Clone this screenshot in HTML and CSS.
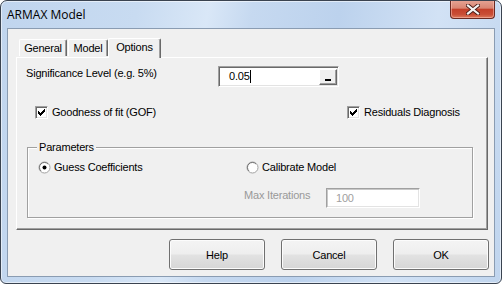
FILE: index.html
```html
<!DOCTYPE html>
<html lang="en">

<head>
    <title>ARMAX Model</title>
    <link rel="stylesheet" href="styles.css">
</head>

<body>
    <div class="window">
        <div class="titlebar">
            <span class="title">ARMAX Model</span>
            <div class="close">
                <svg width="14" height="11" viewBox="0 0 14 11">
                    <path d="M2 1.5 L12 9.5 M12 1.5 L2 9.5" stroke="#4a1c16" stroke-width="4" stroke-linecap="square" fill="none" />
                    <path d="M2 1.5 L12 9.5 M12 1.5 L2 9.5" stroke="#f4f4f4" stroke-width="2.2" stroke-linecap="square" fill="none" />
                </svg>
            </div>
        </div>
        <div class="client">
            <div class="tabs">
                <div class="tab tab-general">General</div>
                <div class="tab tab-model">Model</div>
                <div class="tab tab-options active">Options</div>
            </div>
            <div class="page">
                <div class="sig-row">
                    <span class="label">Significance Level (e.g. 5%)</span>
                    <div class="refedit">
                        <span class="value">0.05</span><span class="caret"></span>
                        <span class="ref-btn"><span class="ref-bar"></span></span>
                    </div>
                </div>
                <div class="check-row">
                    <label class="check">
                        <span class="box">
                            <svg width="7" height="7" viewBox="0 0 7 7" shape-rendering="crispEdges">
                                <path d="M0 2h1v3h-1z M1 3h1v3h-1z M2 4h1v3h-1z M3 3h1v3h-1z M4 2h1v3h-1z M5 1h1v3h-1z M6 0h1v3h-1z" fill="#000" />
                            </svg>
                        </span>
                        Goodness of fit (GOF)
                    </label>
                    <label class="check">
                        <span class="box">
                            <svg width="7" height="7" viewBox="0 0 7 7" shape-rendering="crispEdges">
                                <path d="M0 2h1v3h-1z M1 3h1v3h-1z M2 4h1v3h-1z M3 3h1v3h-1z M4 2h1v3h-1z M5 1h1v3h-1z M6 0h1v3h-1z" fill="#000" />
                            </svg>
                        </span>
                        Residuals Diagnosis
                    </label>
                </div>
                <div class="group">
                    <span class="legend">Parameters</span>
                    <div class="radio-row">
                        <label class="radio">
                            <svg class="dot" width="13" height="13" viewBox="0 0 13 13">
                                <circle cx="6.5" cy="6.5" r="5.5" fill="#fff" stroke="#a0a0a0" />
                                <path d="M2.6 10.4 A5.5 5.5 0 0 1 10.4 2.6" stroke="#696969" fill="none" transform="translate(0.6 0.6) scale(0.9)" />
                                <circle cx="6.5" cy="6.5" r="2" fill="#000" />
                            </svg>
                            Guess Coefficients
                        </label>
                        <label class="radio">
                            <svg class="dot" width="13" height="13" viewBox="0 0 13 13">
                                <circle cx="6.5" cy="6.5" r="5.5" fill="#fff" stroke="#a0a0a0" />
                                <path d="M2.6 10.4 A5.5 5.5 0 0 1 10.4 2.6" stroke="#696969" fill="none" transform="translate(0.6 0.6) scale(0.9)" />
                            </svg>
                            Calibrate Model
                        </label>
                    </div>
                    <div class="iter-row">
                        <span class="label disabled">Max Iterations</span>
                        <div class="textbox">100</div>
                    </div>
                </div>
            </div>
            <div class="buttons">
                <button>Help</button>
                <button>Cancel</button>
                <button>OK</button>
            </div>
        </div>
    </div>
</body>

</html>
```

FILE: styles.css
```css
body {
    margin: 0;
    background: #fff;
    font-family: "Liberation Sans", Arial, sans-serif;
    font-size: 11px;
    letter-spacing: -0.2px;
    color: #000;
}

.window {
    width: 502px;
    height: 284px;
    box-sizing: border-box;
    border: 1px solid #3a4350;
    border-radius: 7px 7px 6px 6px;
    background: linear-gradient(100deg, #c0d5ee 0%, #c8dbf1 25%, #d9e7f7 38%, #c6d9f0 46%, #bcd2ed 62%, #d2e2f5 80%, #c0d5ee 100%);
    box-shadow: inset 0 0 0 1px rgba(255, 255, 255, 0.55);
    display: flex;
    flex-direction: column;
    overflow: hidden;
}

.titlebar {
    height: 27px;
    display: flex;
    align-items: flex-start;
}

.title {
    padding-left: 6px;
    line-height: 27px;
    font-family: "Open Sans", sans-serif;
    font-size: 12px;
    letter-spacing: 0;
    color: #000;
}

.close {
    margin-left: auto;
    margin-right: 6px;
    margin-top: -1px;
    width: 45px;
    height: 19px;
    box-sizing: border-box;
    border: 1px solid #6b2a22;
    border-top: none;
    border-radius: 0 0 4px 4px;
    background: linear-gradient(#e6a596 0%, #d98572 45%, #c4402a 52%, #c94e36 80%, #dc7a5c 100%);
    box-shadow: inset 0 0 0 1px rgba(255, 200, 190, 0.5);
    display: flex;
    justify-content: center;
    align-items: center;
}

.client {
    flex: 1;
    margin: 0 6px 6px;
    border: 1px solid #8a9cb2;
    background: #f0f0f0;
    display: flex;
    flex-direction: column;
}

/* tab strip */
.tabs {
    height: 28px;
    padding-left: 11px;
    display: flex;
    align-items: flex-end;
}

.tab {
    height: 17px;
    box-sizing: border-box;
    border-top: 1px solid #fff;
    border-left: 1px solid #fff;
    border-right: 1px solid #696969;
    box-shadow: inset -1px 0 0 #a0a0a0;
    border-radius: 2px 2px 0 0;
    text-align: center;
    line-height: 16px;
    margin-bottom: 1px;
}

.tab-general {
    width: 48px;
}

.tab-model {
    width: 40px;
    margin-left: 1px;
}

.tab-options {
    width: 53px;
}

.tab.active {
    height: 20px;
    line-height: 17px;
    margin-bottom: -1px;
    background: #f0f0f0;
    position: relative;
    z-index: 1;
}

.page {
    margin-left: 8px;
    width: 472px;
    height: 173px;
    box-sizing: border-box;
    border-top: 1px solid #fff;
    border-left: 1px solid #fff;
    border-right: 1px solid #696969;
    border-bottom: 1px solid #696969;
    box-shadow: inset -1px -1px 0 #a0a0a0;
}

.label {
    line-height: 13px;
}

.disabled {
    color: #999;
}

.sig-row {
    display: flex;
    align-items: flex-start;
    padding: 8px 0 0 9px;
}

.sig-row .label {
    width: 192px;
    margin-top: 1px;
}

.refedit {
    width: 121px;
    height: 21px;
    box-sizing: border-box;
    border: 1px solid;
    border-color: #a0a0a0 #fff #fff #a0a0a0;
    box-shadow: inset 1px 1px 0 #696969, inset -1px -1px 0 #e3e3e3;
    background: #fff;
    display: flex;
    align-items: center;
    padding: 0 1px 0 10px;
}

.value {
    line-height: 13px;
}

.caret {
    width: 1px;
    height: 13px;
    background: #000;
}

.ref-btn {
    margin-left: auto;
    width: 18px;
    height: 16px;
    box-sizing: border-box;
    border: 1px solid;
    border-color: #fff #696969 #696969 #fff;
    box-shadow: inset -1px -1px 0 #a0a0a0;
    background: #f0f0f0;
    display: flex;
    justify-content: center;
    align-items: flex-end;
    padding-bottom: 3px;
}

.ref-bar {
    width: 6px;
    height: 2px;
    background: #000;
}

.check-row {
    display: grid;
    grid-template-columns: 312px auto;
    margin-top: 19px;
    padding-left: 18px;
}

.check,
.radio {
    display: flex;
    align-items: center;
    gap: 4px;
    line-height: 13px;
}

.box {
    width: 13px;
    height: 13px;
    box-sizing: border-box;
    border: 1px solid;
    border-color: #a0a0a0 #fff #fff #a0a0a0;
    box-shadow: inset 1px 1px 0 #696969, inset -1px -1px 0 #e3e3e3;
    background: #fff;
    display: flex;
    justify-content: center;
    align-items: center;
}

.group {
    margin: 28px 0 0 10px;
    width: 446px;
    height: 71px;
    box-sizing: border-box;
    border: 1px solid #a0a0a0;
    box-shadow: 1px 1px 0 #fff, inset 1px 1px 0 #fff;
}

.legend {
    display: inline-block;
    margin: -7px 0 0 9px;
    padding: 0 2px;
    line-height: 13px;
    background: #f0f0f0;
    vertical-align: top;
}

.radio-row {
    display: grid;
    grid-template-columns: 208px auto;
    margin-top: 1px;
    padding-left: 10px;
}

.radio {
    gap: 3px;
}

.iter-row {
    display: flex;
    align-items: flex-start;
    margin: 14px 0 0 216px;
}

.iter-row .label {
    width: 82px;
    margin-top: 1px;
}

.textbox {
    width: 94px;
    height: 20px;
    box-sizing: border-box;
    border: 1px solid;
    border-color: #a0a0a0 #fff #fff #a0a0a0;
    box-shadow: inset 1px 1px 0 #c8c8c8, inset -1px -1px 0 #e3e3e3;
    background: #fff;
    color: #a0a0a0;
    line-height: 18px;
    padding-left: 9px;
}

.buttons {
    display: flex;
    justify-content: flex-end;
    gap: 16px;
    margin: 9px 5px 0 0;
}

button {
    width: 96px;
    height: 31px;
    border: 1px solid #707070;
    border-radius: 3px;
    background: linear-gradient(#f4f4f4 0%, #eeeeee 48%, #e2e2e2 52%, #d6d6d6 100%);
    box-shadow: inset 0 0 0 1px #fcfcfc;
    font-family: "Liberation Sans", Arial, sans-serif;
    font-size: 11px;
    letter-spacing: -0.2px;
    color: #000;
    padding: 0;
}
```
